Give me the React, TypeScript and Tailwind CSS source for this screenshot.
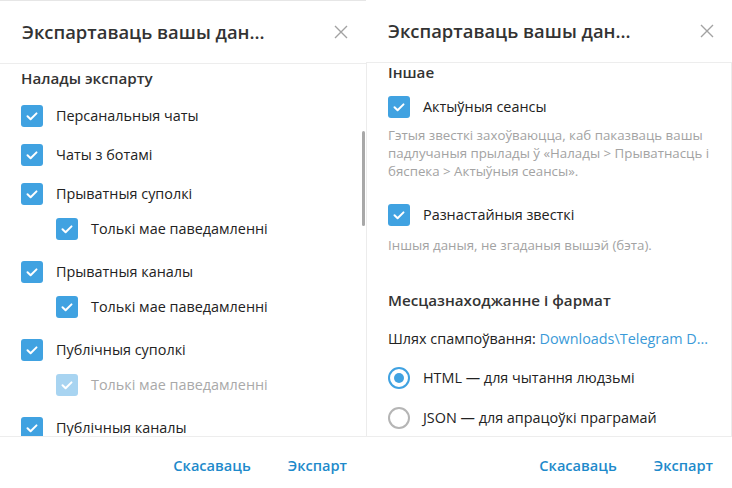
import React from 'react'

const font = { fontFamily: '"Open Sans", "Noto Sans", sans-serif' }

function CloseIcon() {
  return (
    <svg width="14" height="14" viewBox="0 0 14 14" className="text-[#a2a2a2]">
      <path d="M1 1 L13 13 M13 1 L1 13" stroke="currentColor" strokeWidth="1.4" fill="none" />
    </svg>
  )
}

function Check({ faded = false }: { faded?: boolean }) {
  return (
    <div className={`flex h-[22px] w-[22px] shrink-0 items-center justify-center rounded-[3px] ${faded ? 'bg-[#a8d4f1]' : 'bg-[#40a2e1]'}`}>
      <svg width="22" height="22" viewBox="0 0 22 22">
        <path d="M6.5 11.3 L9.6 14.3 L15.5 8.4" stroke="#fff" strokeWidth="2" fill="none" strokeLinecap="round" strokeLinejoin="round" />
      </svg>
    </div>
  )
}

function Radio({ on }: { on: boolean }) {
  return on ? (
    <div className="flex h-[22px] w-[22px] shrink-0 items-center justify-center rounded-full border-2 border-[#40a2e1]">
      <div className="h-[10px] w-[10px] rounded-full bg-[#40a2e1]" />
    </div>
  ) : (
    <div className="h-[22px] w-[22px] shrink-0 rounded-full border-2 border-[#b5b5b5]" />
  )
}

function Header() {
  return (
    <div className="flex h-[63px] shrink-0 items-center justify-between border-b border-[#ededed] pl-[22px] pr-[18px]">
      <span className="text-[18.4px] font-semibold text-[#333]">Экспартаваць вашы дан...</span>
      <CloseIcon />
    </div>
  )
}

function Footer() {
  return (
    <div className="flex h-[52px] shrink-0 items-center justify-end gap-[37px] border-t border-[#ededed] pt-[7px] pr-[19px] text-[14.6px] font-semibold text-[#1e8acb]">
      <span>Скасаваць</span>
      <span>Экспарт</span>
    </div>
  )
}

function Row({ label, sub = false, faded = false }: { label: string; sub?: boolean; faded?: boolean }) {
  return (
    <div className={`flex items-center gap-[13px] ${sub ? 'mb-[8px] h-[31px] pl-[35px]' : 'h-[39px]'}`}>
      <Check faded={faded} />
      <span className={`text-[14.4px] ${faded ? 'text-[#a9a9a9]' : 'text-[#222]'}`}>{label}</span>
    </div>
  )
}

function LeftPanel() {
  return (
    <div className="relative flex h-[488px] w-[366px] flex-col border-t border-[#e6e6e6] bg-white">
      <Header />
      <div className="flex-1 overflow-hidden pl-[21px]">
        <div className="flex h-[29px] items-center text-[15.2px] font-semibold text-[#333]">Налады экспарту</div>
        <div className="pt-[3.5px]">
          <Row label="Персанальныя чаты" />
          <Row label="Чаты з ботамі" />
          <Row label="Прыватныя суполкі" />
          <Row label="Толькі мае паведамленні" sub />
          <Row label="Прыватныя каналы" />
          <Row label="Толькі мае паведамленні" sub />
          <Row label="Публічныя суполкі" />
          <Row label="Толькі мае паведамленні" sub faded />
          <Row label="Публічныя каналы" />
        </div>
      </div>
      <Footer />
      {/* scrollbar thumb */}
      <div className="absolute right-[1px] top-[130px] h-[95px] w-[3px] rounded-full bg-[#a8a8a8]" />
    </div>
  )
}

function RightPanel() {
  return (
    <div className="flex h-[488px] w-[366px] flex-col bg-white">
      <Header />
      <div className="flex-1 overflow-hidden border-l border-r border-[#ececec] pl-[21px] pr-[10px]">
        <div className="h-[18px] text-[15.2px] font-semibold leading-[18px] text-[#333]">Іншае</div>
        <div className="mt-[15px] flex items-center gap-[13px]">
          <Check />
          <span className="text-[14.4px] text-[#222]">Актыўныя сеансы</span>
        </div>
        <p className="mt-[8px] text-[13.3px] leading-[18px] text-[#a3a3a3]">
          Гэтыя звесткі захоўваюцца, каб паказваць вашы падлучаныя прылады ў «Налады &gt; Прыватнасць і бяспека &gt; Актыўныя сеансы».
        </p>
        <div className="mt-[24px] flex items-center gap-[13px]">
          <Check />
          <span className="text-[14.4px] text-[#222]">Разнастайныя звесткі</span>
        </div>
        <p className="mt-[10px] text-[13.3px] leading-[18px] text-[#a3a3a3]">Іншыя даныя, не згаданыя вышэй (бэта).</p>
        <div className="mt-[36px] flex h-[20px] items-center text-[15.2px] font-semibold text-[#333]">Месцазнаходжанне і фармат</div>
        <div className="mt-[19px] flex h-[20px] items-center whitespace-nowrap text-[14.4px] text-[#222]">
          Шлях спампоўвання:&nbsp;<span className="text-[#3a9ad8]">{'Downloads\\Telegram D...'}</span>
        </div>
        <div className="mt-[18px] flex items-center gap-[13px]">
          <Radio on />
          <span className="text-[14.4px] text-[#222]">HTML — для чытання людзьмі</span>
        </div>
        <div className="mt-[17.5px] flex items-center gap-[13px]">
          <Radio on={false} />
          <span className="text-[14.4px] text-[#222]">JSON — для апрацоўкі праграмай</span>
        </div>
      </div>
      <Footer />
    </div>
  )
}

export default function App() {
  return (
    <div className="flex h-[488px] w-[732px] overflow-hidden bg-white" style={font}>
      <LeftPanel />
      <RightPanel />
    </div>
  )
}
